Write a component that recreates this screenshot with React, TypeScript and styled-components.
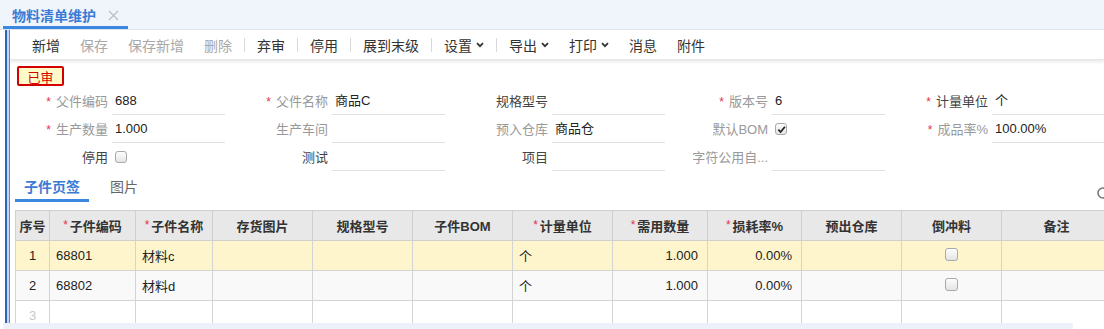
import React from "react";
import styled, { createGlobalStyle } from "styled-components";

const GlobalStyle = createGlobalStyle`
  html, body { margin: 0; padding: 0; background: #fff; }
  body {
    font-family: "Liberation Sans", "Noto Sans CJK SC", sans-serif;
    font-size: 13px;
    color: #333;
  }
  * { box-sizing: border-box; }
`;

const Page = styled.div`
  width: 1104px;
  height: 329px;
  overflow: hidden;
  display: flex;
  flex-direction: column;
`;

const TopBar = styled.div`
  height: 30px;
  flex-shrink: 0;
  background: #f0f5fc;
  border-bottom: 1px solid #dde4ee;
  display: flex;
  padding-left: 3px;
`;

const PageTab = styled.div`
  width: 125px;
  height: 29px;
  border-bottom: 3px solid #3c87e0;
  display: flex;
  align-items: center;
  padding: 4px 0 0 9px;
  gap: 12px;
  font-size: 14px;
  font-weight: bold;
  color: #3a7bd5;
`;

const Main = styled.div`
  height: 293px;
  flex-shrink: 0;
  display: flex;
  overflow: hidden;
`;

const LeftRail = styled.div`
  margin-left: 5px;
  width: 5px;
  flex-shrink: 0;
  border-left: 2px solid #2f63bb;
  border-right: 1px solid #5d86cf;
  background: #c4d6f2;
`;

const Content = styled.div`
  flex: 1;
  min-width: 0;
  display: flex;
  flex-direction: column;
  overflow: hidden;
`;

const Toolbar = styled.div`
  height: 30px;
  flex-shrink: 0;
  display: flex;
  align-items: center;
  padding-left: 12px;
  font-size: 14px;
  border-bottom: 1px solid #e8e8e8;
  box-shadow: 0 2px 3px rgba(0, 0, 0, 0.09);
`;

const ToolButton = styled.div<{ $disabled?: boolean }>`
  padding: 0 10px;
  display: flex;
  align-items: center;
  gap: 4px;
  color: ${(p) => (p.$disabled ? "#a8a8a8" : "#333")};
  white-space: nowrap;
`;

const ToolSep = styled.div`
  width: 1px;
  height: 14px;
  background: #d9d9d9;
  margin: 0 2px;
`;

const StatusBadge = styled.div`
  align-self: flex-start;
  margin: 6px 0 2px 7px;
  width: 47px;
  height: 20px;
  border: 2px solid #d40000;
  border-radius: 2px;
  background: #fffbc8;
  color: #d40000;
  font-size: 13px;
  display: flex;
  align-items: center;
  justify-content: center;
`;

const Form = styled.div`
  display: grid;
  grid-template-columns: 215px repeat(4, 220px);
  grid-auto-rows: 28px;
  flex-shrink: 0;
`;

const Field = styled.div`
  display: flex;
  align-items: flex-start;
`;

const FieldLabel = styled.div<{ $muted?: boolean }>`
  flex: 1;
  text-align: right;
  line-height: 27px;
  padding-right: 4px;
  white-space: nowrap;
  color: ${(p) => (p.$muted ? "#999" : "#444")};
`;

const Req = styled.span`
  color: #e2334f;
  font-size: 12px;
  margin-right: 5px;
`;

const FieldValue = styled.div<{ $line?: boolean }>`
  width: 113px;
  height: 27px;
  line-height: 26px;
  padding-left: 3px;
  color: #222;
  display: flex;
  align-items: center;
  border-bottom: 1px solid ${(p) => (p.$line ? "#e0e0e0" : "transparent")};
`;

const Check = styled.span<{ $size?: number }>`
  display: inline-flex;
  align-items: center;
  justify-content: center;
  width: ${(p) => p.$size ?? 12}px;
  height: ${(p) => p.$size ?? 12}px;
  border: 1px solid #a9a9a9;
  border-radius: 3px;
  background: linear-gradient(#fdfdfd, #e4e4e4);
`;

const SubTabs = styled.div`
  display: flex;
  height: 30px;
  margin-left: 5px;
  flex-shrink: 0;
`;

const SubTab = styled.div<{ $active?: boolean }>`
  padding: 3px 9px 0;
  margin-right: 12px;
  line-height: 24px;
  font-size: 14px;
  font-weight: ${(p) => (p.$active ? "bold" : "normal")};
  color: ${(p) => (p.$active ? "#3a7bd5" : "#666")};
  border-bottom: 3px solid ${(p) => (p.$active ? "#3c87e0" : "transparent")};
`;

const EdgeIcon = styled.svg`
  margin-left: auto;
  margin-right: -6px;
  margin-top: 14px;
  flex-shrink: 0;
`;

const TableWrap = styled.div`
  margin: 8px 0 0 5px;
  flex-shrink: 0;
`;

const Grid = styled.table`
  border-collapse: collapse;
  table-layout: fixed;
  width: 1096px;
`;

const HeadCell = styled.th`
  height: 30px;
  border: 1px solid #cfcfcf;
  background: #e8e8e8;
  font-weight: bold;
  font-size: 13px;
  color: #333;
  text-align: center;
  padding: 0;
  white-space: nowrap;
`;

const HeadReq = styled.span`
  color: #e2334f;
  font-weight: normal;
  font-size: 12px;
  margin-right: 2px;
  position: relative;
  top: -2px;
`;

const Row = styled.tr<{ $bg: string }>`
  height: 30px;
  background: ${(p) => p.$bg};
`;

const Cell = styled.td<{ $align?: string; $faint?: boolean }>`
  border: 1px solid #d4d4d4;
  padding: ${(p) => (p.$align === "right" ? "0 9px 0 6px" : "0 6px")};
  text-align: ${(p) => p.$align ?? "left"};
  color: ${(p) => (p.$faint ? "#c8c8c8" : "#222")};
  white-space: nowrap;
  overflow: hidden;
  font-size: 13px;
`;

const ScrollStrip = styled.div`
  height: 6px;
  width: 1070px;
  margin-left: 3px;
  background: #edf2fa;
  flex-shrink: 0;
`;

const Chevron = () => (
  <svg width="8" height="6" viewBox="0 0 8 6">
    <path d="M1 1.2 L4 4.2 L7 1.2" fill="none" stroke="#333" strokeWidth="1.8" />
  </svg>
);

const CloseX = () => (
  <svg width="11" height="11" viewBox="0 0 11 11">
    <path d="M1 1 L10 10 M10 1 L1 10" stroke="#bdbdbd" strokeWidth="1.2" />
  </svg>
);

const CheckMark = ({ size = 9 }: { size?: number }) => (
  <svg width={size} height={size} viewBox="0 0 10 10">
    <path d="M1.5 5.2 L4 7.8 L8.8 2" fill="none" stroke="#222" strokeWidth="2" />
  </svg>
);

type FieldDef = {
  label: string;
  req?: boolean;
  muted?: boolean;
  value?: string;
  check?: "on" | "off";
};

const fields: FieldDef[] = [
  { label: "父件编码", req: true, muted: true, value: "688" },
  { label: "父件名称", req: true, muted: true, value: "商品C" },
  { label: "规格型号", value: "" },
  { label: "版本号", req: true, muted: true, value: "6" },
  { label: "计量单位", req: true, value: "个" },
  { label: "生产数量", req: true, muted: true, value: "1.000" },
  { label: "生产车间", muted: true, value: "" },
  { label: "预入仓库", muted: true, value: "商品仓" },
  { label: "默认BOM", muted: true, check: "on" },
  { label: "成品率%", req: true, muted: true, value: "100.00%" },
  { label: "停用", check: "off" },
  { label: "测试", value: "" },
  { label: "项目", value: "" },
  { label: "字符公用自...", muted: true, value: "" },
];

const columns: { title: string; width: number; req?: boolean }[] = [
  { title: "序号", width: 34 },
  { title: "子件编码", width: 86, req: true },
  { title: "子件名称", width: 77, req: true },
  { title: "存货图片", width: 100 },
  { title: "规格型号", width: 100 },
  { title: "子件BOM", width: 100 },
  { title: "计量单位", width: 100, req: true },
  { title: "需用数量", width: 95, req: true },
  { title: "损耗率%", width: 94, req: true },
  { title: "预出仓库", width: 100 },
  { title: "倒冲料", width: 100 },
  { title: "备注", width: 110 },
];

const rows = [
  { no: "1", code: "68801", name: "材料c", unit: "个", qty: "1.000", loss: "0.00%", bg: "#fff5cd" },
  { no: "2", code: "68802", name: "材料d", unit: "个", qty: "1.000", loss: "0.00%", bg: "#f9f9f9" },
];

const toolItems: ({ sep: true } | { text: string; disabled?: boolean; menu?: boolean })[] = [
  { text: "新增" },
  { text: "保存", disabled: true },
  { text: "保存新增", disabled: true },
  { text: "删除", disabled: true },
  { sep: true },
  { text: "弃审" },
  { sep: true },
  { text: "停用" },
  { sep: true },
  { text: "展到末级" },
  { sep: true },
  { text: "设置", menu: true },
  { sep: true },
  { text: "导出", menu: true },
  { text: "打印", menu: true },
  { text: "消息" },
  { text: "附件" },
];

export default function App() {
  return (
    <Page>
      <GlobalStyle />
      <TopBar>
        <PageTab>
          <span>物料清单维护</span>
          <CloseX />
        </PageTab>
      </TopBar>
      <Main>
        <LeftRail />
        <Content>
          <Toolbar>
            {toolItems.map((it, i) =>
              "sep" in it ? (
                <ToolSep key={i} />
              ) : (
                <ToolButton key={i} $disabled={it.disabled}>
                  {it.text}
                  {it.menu && <Chevron />}
                </ToolButton>
              )
            )}
          </Toolbar>
          <StatusBadge>已审</StatusBadge>
          <Form>
            {fields.map((f, i) => (
              <Field key={i}>
                <FieldLabel $muted={f.muted}>
                  {f.req && <Req>*</Req>}
                  {f.label}
                </FieldLabel>
                <FieldValue $line={!f.check}>
                  {f.check ? (
                    <Check>{f.check === "on" && <CheckMark />}</Check>
                  ) : (
                    f.value
                  )}
                </FieldValue>
              </Field>
            ))}
          </Form>
          <SubTabs>
            <SubTab $active>子件页签</SubTab>
            <SubTab>图片</SubTab>
            <EdgeIcon width="14" height="14" viewBox="0 0 14 14">
              <circle cx="7" cy="7" r="5" fill="none" stroke="#777" strokeWidth="1.6" />
            </EdgeIcon>
          </SubTabs>
          <TableWrap>
            <Grid>
              <colgroup>
                {columns.map((c, i) => (
                  <col key={i} style={{ width: c.width }} />
                ))}
              </colgroup>
              <thead>
                <tr>
                  {columns.map((c, i) => (
                    <HeadCell key={i}>
                      {c.req && <HeadReq>*</HeadReq>}
                      {c.title}
                    </HeadCell>
                  ))}
                </tr>
              </thead>
              <tbody>
                {rows.map((r) => (
                  <Row key={r.no} $bg={r.bg}>
                    <Cell $align="center">{r.no}</Cell>
                    <Cell>{r.code}</Cell>
                    <Cell>{r.name}</Cell>
                    <Cell />
                    <Cell />
                    <Cell />
                    <Cell>{r.unit}</Cell>
                    <Cell $align="right">{r.qty}</Cell>
                    <Cell $align="right">{r.loss}</Cell>
                    <Cell />
                    <Cell $align="center">
                      <Check $size={13} />
                    </Cell>
                    <Cell />
                  </Row>
                ))}
                <Row $bg="#fff">
                  <Cell $align="center" $faint>
                    3
                  </Cell>
                  {columns.slice(1).map((_, i) => (
                    <Cell key={i} />
                  ))}
                </Row>
              </tbody>
            </Grid>
          </TableWrap>
        </Content>
      </Main>
      <ScrollStrip />
    </Page>
  );
}
